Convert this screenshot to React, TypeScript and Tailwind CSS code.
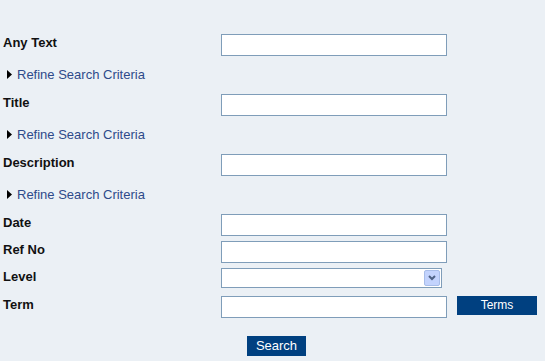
import React from 'react';

const font = { fontFamily: '"Liberation Sans", Arial, sans-serif' };

function Label({ children }: { children: React.ReactNode }) {
  return (
    <div className="w-[221px] shrink-0 pl-[3px] pt-[1px] text-[13px] leading-[16px] font-bold text-[#111]">
      {children}
    </div>
  );
}

function TextBox() {
  return (
    <input
      type="text"
      className="w-[226px] h-[22px] bg-white border border-[#7f9db9] outline-none px-1 text-[12px]"
    />
  );
}

function Refine() {
  return (
    <div className="h-[38px] flex items-center pl-[7px] pb-[1px]">
      <svg width="5" height="9" viewBox="0 0 5 9" className="mr-[5px]">
        <path d="M0 0 L5 4.5 L0 9 Z" fill="#000" />
      </svg>
      <a href="#" className="text-[13px] text-[#2e4a8a] leading-[15px]">
        Refine Search Criteria
      </a>
    </div>
  );
}

function Select() {
  return (
    <div className="w-[221px] h-[20px] bg-white border border-[#7f9db9] flex justify-end items-center pr-[1px]">
      <div className="w-[16px] h-[16px] rounded-[2px] bg-[#c3d3fd] border border-[#a8bde9] flex items-center justify-center">
        <svg width="8" height="6" viewBox="0 0 8 6">
          <path d="M1 1 L4 4 L7 1" stroke="#4d6185" strokeWidth="2" fill="none" />
        </svg>
      </div>
    </div>
  );
}

export default function App() {
  return (
    <main className="min-h-screen w-full bg-[#ebf0f5] pt-[34px]" style={font}>
      <div className="flex">
        <Label>Any Text</Label>
        <TextBox />
      </div>
      <Refine />
      <div className="flex">
        <Label>Title</Label>
        <TextBox />
      </div>
      <Refine />
      <div className="flex">
        <Label>Description</Label>
        <TextBox />
      </div>
      <Refine />
      <div className="flex flex-col gap-[5px]">
        <div className="flex">
          <Label>Date</Label>
          <TextBox />
        </div>
        <div className="flex">
          <Label>Ref No</Label>
          <TextBox />
        </div>
        <div className="flex">
          <Label>Level</Label>
          <Select />
        </div>
      </div>
      <div className="flex mt-[8px]">
        <Label>Term</Label>
        <TextBox />
        <button className="ml-[10px] w-[80px] h-[19px] bg-[#004080] text-white text-[12px] leading-[19px]">
          Terms
        </button>
      </div>
      <div className="flex pl-[247px] mt-[18px]">
        <button className="w-[59px] h-[20px] bg-[#004080] text-white text-[13px] leading-[20px]">
          Search
        </button>
      </div>
    </main>
  );
}
